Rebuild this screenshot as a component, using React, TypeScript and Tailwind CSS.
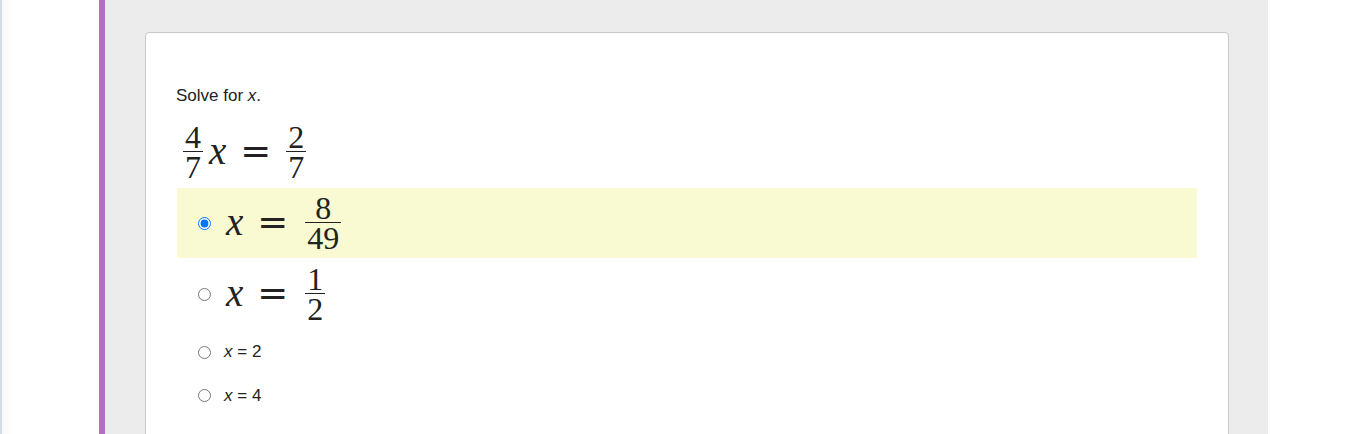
import React from "react"

const mathFont = "font-['Liberation_Serif',serif]"

function Frac({ num, den }: { num: string; den: string }) {
  return (
    <span className="inline-flex flex-col items-center align-middle mx-[3px] text-[32px]">
      <span className="leading-[24px] pb-[2px] px-[2px]">{num}</span>
      <span className="h-[1.5px] w-full bg-[#222]" />
      <span className="leading-[24px] pt-[3px] px-[2px]">{den}</span>
    </span>
  )
}

function Eq({ children }: { children: React.ReactNode }) {
  return (
    <span className={`${mathFont} text-[34px] text-[#222] inline-flex items-center`}>
      {children}
    </span>
  )
}

const X = ({ gap = false }: { gap?: boolean }) => (
  <i className={`text-[39px] leading-none mr-[2px] -mt-[4px] ${gap ? "ml-[3px]" : ""}`}>x</i>
)
const Equals = () => (
  <span className="font-['DejaVu_Serif',serif] text-[37px] leading-none mx-[12px] -mt-[2px]">=</span>
)

const options = [
  { id: "a", big: true, h: "h-[70px]", num: "8", den: "49", checked: true },
  { id: "b", big: true, h: "h-[72px]", num: "1", den: "2", checked: false },
  { id: "c", big: false, h: "h-[44px]", text: "2", checked: false },
  { id: "d", big: false, h: "h-[43px]", text: "4", checked: false },
]

export default function App() {
  return (
    <div className="h-[434px] w-[1366px] overflow-hidden flex bg-white font-['Liberation_Sans',Arial,sans-serif]">
      <div className="w-[99px] border-l-2 border-[#d3dbe5] bg-gradient-to-r from-[#f7f8f9] to-white to-[12%]" />
      <div className="w-[6px] bg-[#b470c9]" />

      <div className="w-[1163px] bg-[#ececec] pt-[32px] pl-[40px] pr-[39px]">
        <div className="h-[460px] bg-white border border-[#c9c9c9] rounded-[4px] pt-[54px] px-[30px]">
          <p className="text-[17px] text-[#222] leading-[18px]">
            Solve for <i>x</i>.
          </p>

          <div className="mt-[18px] pl-[4px] h-[58px] flex items-center">
            <Eq>
              <Frac num="4" den="7" />
              <X gap />
              <Equals />
              <Frac num="2" den="7" />
            </Eq>
          </div>

          <div className="mt-[7px] ml-[1px] mr-[1px]">
            {options.map((o) => (
              <label
                key={o.id}
                className={`flex items-center pl-[21px] ${o.h} ${
                  o.checked ? "bg-[#fafad2]" : ""
                }`}
              >
                <input
                  type="radio"
                  name="answer"
                  checked={o.checked}
                  readOnly
                  className="w-[13px] h-[13px] m-0 mr-[15px]"
                />
                {o.big ? (
                  <Eq>
                    <X />
                    <Equals />
                    <span className="ml-[2px] inline-flex">
                      <Frac num={o.num!} den={o.den!} />
                    </span>
                  </Eq>
                ) : (
                  <span className="text-[17px] text-[#222] -ml-[2px]">
                    <i>x</i> = {o.text}
                  </span>
                )}
              </label>
            ))}
          </div>
        </div>
      </div>

      <div className="flex-1 bg-white" />
    </div>
  )
}
